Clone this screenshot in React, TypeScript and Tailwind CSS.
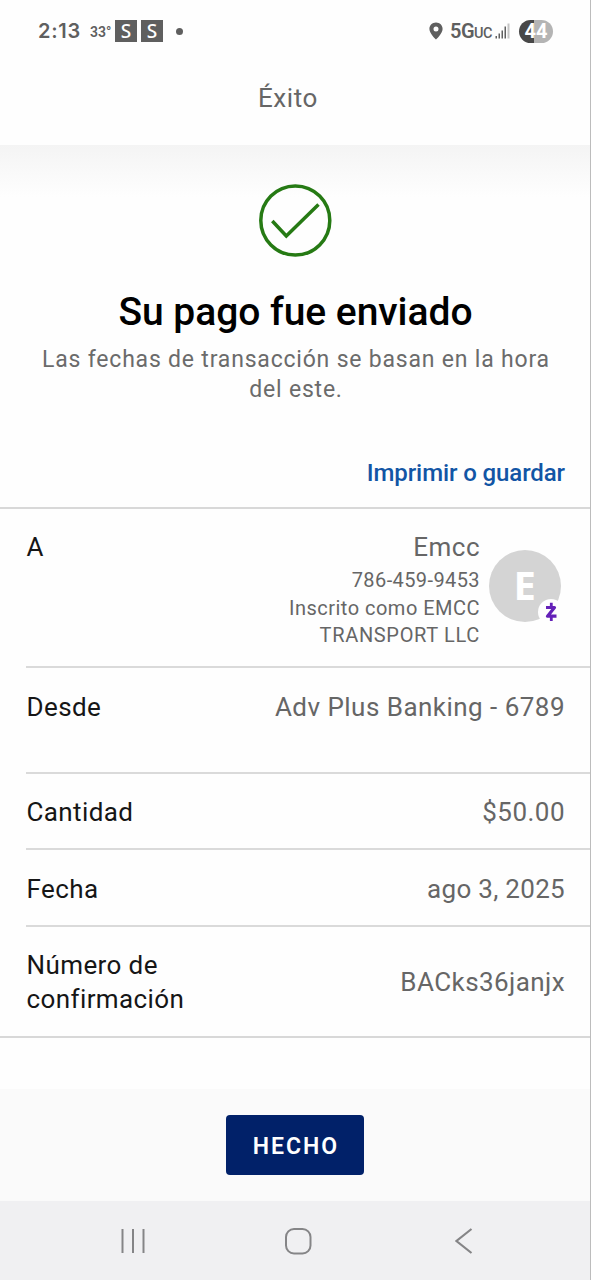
import type { ReactNode } from 'react';

function StatusBar() {
  return (
    <div className="flex h-[62px] items-center justify-between pr-[37px] pl-[38px] text-[#5f5f5f]">
      <div className="flex items-center">
        <span className="w-[43px] whitespace-nowrap font-['Inter',sans-serif] text-[20px] leading-6 font-semibold tracking-[0.7px]">2:13</span>
        <span className="ml-[9px] w-[25px] whitespace-nowrap pt-px text-[14px] leading-6 font-semibold">33°</span>
        <span className="flex size-[22px] items-center justify-center bg-[#5f5f5f] font-['Noto_Sans',sans-serif] text-[19px] leading-none font-medium text-white">S</span>
        <span className="ml-1 flex size-[22px] items-center justify-center bg-[#5f5f5f] font-['Noto_Sans',sans-serif] text-[19px] leading-none font-medium text-white">S</span>
        <span className="ml-[13px] size-[7px] rounded-full bg-[#5f5f5f]" />
      </div>
      <div className="flex items-center">
        <svg className="h-[18px] w-[14px]" viewBox="0 0 14 18">
          <path fillRule="evenodd" fill="#5f5f5f" d="M7 0.5C3.3 0.5 0.4 3.3 0.4 6.9C0.4 11.5 7 17.4 7 17.4S13.6 11.5 13.6 6.9C13.6 3.3 10.7 0.5 7 0.5ZM7 4.4A2.5 2.5 0 1 1 7 9.4A2.5 2.5 0 1 1 7 4.4Z" />
        </svg>
        <span className="ml-[7px] w-[41px] whitespace-nowrap pt-[2px] text-[20px] leading-6 font-semibold tracking-[-0.5px]">
          5G<span className="text-[14.5px] font-medium tracking-[-0.6px]">UC</span>
        </span>
        <svg className="ml-[4px] h-4 w-[15px]" viewBox="0 0 15 16">
          <path fill="#606060" d="M0.500 13h1.500v2.500h-1.500zM3.500 10.500h1.500v5h-1.500zM6.500 7.500h1.500v8h-1.500zM9.500 3.500h1.500v12h-1.500z" />
          <path fill="#c4c4c4" d="M12.500 0.500h2v15h-2z" />
        </svg>
        <span className="ml-[9px] flex h-[23px] w-[34px] items-center justify-center rounded-full bg-linear-to-r from-[#484848] from-43% to-[#b4b4b4] to-43% text-[20px] leading-none font-bold text-white">44</span>
      </div>
    </div>
  );
}

function Row({ label, className, children }: { label: ReactNode; className: string; children: ReactNode }) {
  return (
    <div className={`ml-[26px] flex justify-between pr-[25px] text-[26px] leading-[34px] ${className}`}>
      <div className="pl-[0.5px] whitespace-nowrap tracking-[0.4px] text-[#161616]">{label}</div>
      <div className="whitespace-nowrap text-right tracking-[0.47px] text-[#666]">{children}</div>
    </div>
  );
}

export default function App() {
  return (
    <div className="flex h-[1280px] w-[591px] flex-col overflow-hidden border-r border-[#bcbcbc] bg-[#fefefe] font-['Roboto',sans-serif]">
      <header className="h-[145px] shrink-0">
        <StatusBar />
        <h1 className="mt-[19px] pr-[14px] text-center text-[26px] leading-[34px] tracking-[0.6px] text-[#666]">Éxito</h1>
      </header>

      <main className="flex h-[944px] shrink-0 flex-col">
        <section className="flex h-[364px] shrink-0 flex-col items-center border-b-2 border-[#d8d8d8] bg-linear-to-b from-[#f4f4f4] to-[#fefefe] to-[52px] pt-[38px]">
          <svg className="size-[74px] shrink-0" viewBox="0 0 74 74" fill="none" stroke="#267a14" strokeWidth="3.500">
            <circle cx="37.300" cy="37.500" r="34.500" />
            <path d="M14.300 38L28.300 53L60.500 21.500" />
          </svg>
          <h2 className="mt-[31px] ml-px whitespace-nowrap text-[39px] leading-[48px] font-medium tracking-[-0.05px] text-black">Su pago fue enviado</h2>
          <p className="mt-[9px] ml-[2px] whitespace-nowrap text-center text-[23px] leading-[30px] tracking-[0.8px] text-[#6b6b6b]">
            Las fechas de transacción se basan en la hora
            <br />
            del este.
          </p>
          <a className="mt-[52px] mr-[25px] self-end whitespace-nowrap text-[24px] leading-[32px] font-medium tracking-[-0.1px] text-[#1255a5]">Imprimir o guardar</a>
        </section>

        <Row label="A" className="h-[159px] border-b-2 border-[#dadada] pt-[21px]">
          <div className="flex">
            <div>
              <div>Emcc</div>
              <div className="mt-[2px] text-[20px] leading-[28px] tracking-[0.4px]">786-459-9453</div>
              <div className="text-[20px] leading-[28px] tracking-[0.48px]">Inscrito como EMCC</div>
              <div className="text-[20px] leading-[26px] tracking-[0.66px]">TRANSPORT LLC</div>
            </div>
            <div className="relative mt-5 mr-[4px] ml-[9px] flex size-[72px] items-center justify-center rounded-full bg-[#d4d4d4] pb-[2px] font-['Open_Sans',sans-serif] text-[40px] leading-none font-bold text-white">
              E
              <div className="absolute top-[49px] left-[49px] flex size-[26px] items-center justify-center rounded-full bg-[#fefefe]">
                <svg className="size-5" viewBox="0 0 20 20" fill="none" stroke="#6420b8" strokeWidth="3.200">
                  <path strokeLinejoin="round" d="M5 5.500H13.500L6.500 14.200H15.500" />
                  <path strokeWidth="2.800" d="M10.300 0.800V5M10.300 14.500V19" />
                </svg>
              </div>
            </div>
          </div>
        </Row>
        <Row label="Desde" className="h-[106px] border-b-2 border-[#dadada] pt-[22px]">Adv Plus Banking - 6789</Row>
        <Row label="Cantidad" className="h-[76px] items-center border-b-2 border-[#dadada] pt-px">$50.00</Row>
        <Row label="Fecha" className="h-[77px] items-center border-b-2 border-[#dadada] pt-[3px]">
          <span className="tracking-[0.3px]">ago 3, 2025</span>
        </Row>
        <Row label={<>Número de<br />confirmación</>} className="h-[109px] items-center pt-px">
          <span className="tracking-[0.42px]">BACks36janjx</span>
        </Row>
        <div className="h-[2px] shrink-0 bg-[#d8d8d8]" />
      </main>

      <footer className="flex h-[112px] shrink-0 items-center justify-center bg-[#fafafa]">
        <button className="h-[60px] w-[138px] rounded-[4px] bg-[#012169] pt-[5px] pl-[2px] text-[23px] font-semibold tracking-[2px] text-white">HECHO</button>
      </footer>

      <nav className="flex h-[79px] shrink-0 items-center bg-[#f0f0f2] pl-[120px]">
        <svg className="h-[26px] w-[26px]" viewBox="0 0 26 26" fill="none" stroke="#858587" strokeWidth="2">
          <path d="M2.500 1V25M13 1V25M23.500 1V25" />
        </svg>
        <svg className="ml-[138px] size-7" viewBox="0 0 28 28" fill="none" stroke="#858587" strokeWidth="2">
          <rect x="2" y="2" width="24.500" height="24.500" rx="8" />
        </svg>
        <svg className="ml-[143px] h-[28px] w-[18px]" viewBox="0 0 18 28" fill="none" stroke="#858587" strokeWidth="2.200">
          <path d="M16.500 2L1.500 14L16.500 26" />
        </svg>
      </nav>
    </div>
  );
}
